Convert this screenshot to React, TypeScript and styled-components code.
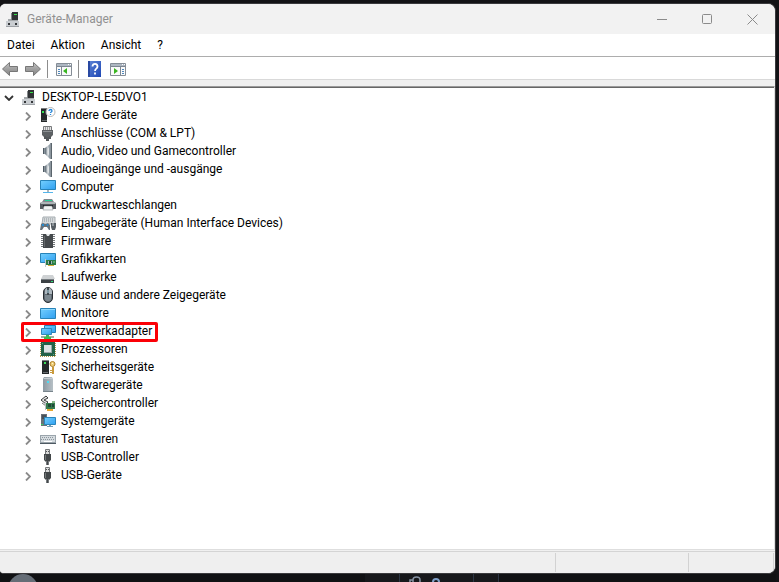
import React from "react";
import styled, { createGlobalStyle } from "styled-components";

const GlobalStyle = createGlobalStyle`
  *, *::before, *::after { box-sizing: border-box; }
  body {
    margin: 0;
    background: #131316;
    color: #000;
    font: 12px/18px Roboto, "Open Sans", sans-serif;
  }
  button {
    font: inherit;
    color: inherit;
    background: none;
    border: 0;
    padding: 0;
  }
  svg { display: block; flex: none; }
`;

const Desktop = styled.div`
  min-height: 100vh;
  display: flex;
  flex-direction: column;
  padding: 3px 3px 0 0;
  background: #131316;
  overflow: hidden;
`;

const Window = styled.main`
  flex: 1;
  display: flex;
  flex-direction: column;
  border: 1px solid #3a3a3d;
  border-left: 0;
  border-radius: 6px 8px 8px 4px;
  background: #fff;
  overflow: hidden;
`;

const TitleBar = styled.header`
  display: flex;
  align-items: center;
  height: 30px;
  padding-left: 5px;
  background: #f2f2f2;
`;

const Title = styled.h1`
  flex: 1;
  margin: 0 0 0 6px;
  font-size: 12px;
  font-weight: 400;
  color: #919191;
`;

const CaptionButton = styled.button`
  width: 45px;
  height: 30px;
  display: grid;
  place-items: center;
  color: #8b8b8b;
`;

const MenuBar = styled.nav`
  display: flex;
  align-items: center;
  gap: 16px;
  height: 23px;
  padding-left: 7px;
  border-bottom: 1px solid #adadad;
`;

const ToolBar = styled.div`
  display: flex;
  align-items: center;
  height: 23px;
  padding: 2px 0 0 2px;
  border-bottom: 1px solid #d9d9d9;
`;

const ToolButton = styled.button<{ $gap: number }>`
  margin-right: ${(p) => p.$gap}px;
`;

const ToolSeparator = styled.span<{ $gap: number }>`
  width: 1px;
  height: 18px;
  margin-right: ${(p) => p.$gap}px;
  background: #8d8d8d;
`;

const Frame = styled.section`
  flex: 1;
  display: flex;
  flex-direction: column;
  padding: 6px 0 1px;
  background: #f0f0f0;
`;

const TreePane = styled.div`
  flex: 1;
  background: #fff;
  border: solid #dedede;
  border-width: 0 1px 1px 0;
  border-top: 1px solid #9b9b9b;
  box-shadow: inset 0 1px #666;
  padding-top: 1px;
`;

const Tree = styled.ul`
  list-style: none;
  margin: 0;
  padding: 0;
`;

const Row = styled.div<{ $level: number }>`
  position: relative;
  display: flex;
  align-items: center;
  width: max-content;
  height: 18px;
  padding-left: ${(p) => (p.$level ? 22 : 3)}px;
  padding-right: 6px;
`;

const Expander = styled.button<{ $open?: boolean }>`
  width: 12px;
  height: 18px;
  margin-right: 6px;
  padding-top: ${(p) => (p.$open ? 2 : 3)}px;
  display: grid;
  place-items: center;
  color: ${(p) => (p.$open ? "#333" : "#8a8a8a")};
`;

const Label = styled.span`
  margin-left: 5px;
  white-space: nowrap;
`;

const Highlight = styled.span`
  position: absolute;
  z-index: 1;
  inset: 0 0 -2px 21px;
  border: 3px solid #fb0007;
  border-radius: 2px;
  pointer-events: none;
`;

const StatusBar = styled.footer`
  display: grid;
  grid-template-columns: 1fr 133px 85px;
  height: 22px;
  padding: 1px 1px 1px 0;
  background: #efefef;
  border-top: 1px solid #d4d4d4;
`;

const StatusPanel = styled.span`
  border-right: 1px solid #d2d2d2;
`;

const Strip = styled.div`
  display: flex;
  height: 8px;
  padding-right: 277px;
  overflow: hidden;
  background: #101113;
`;

const Avatar = styled.span`
  width: 30px;
  height: 30px;
  margin-left: 8px;
  border-radius: 50%;
  background: #656d76;
  flex: none;
`;

const StripCell = styled.span<{ $width: number }>`
  width: ${(p) => p.$width}px;
  border-right: 1px solid #2c3644;
  padding-left: 9px;
  background: #17181b;
`;

const StripSpace = styled.span`
  flex: 1;
`;

type PicProps = { children: React.ReactNode; w?: number; h?: number };
const Pic = ({ children, w = 16, h = 16 }: PicProps) => (
  <svg width={w} height={h} viewBox={`0 0 ${w} ${h}`} aria-hidden="true" fill="none">
    {children}
  </svg>
);

const gradients = (
  <>
    <linearGradient id="screen" x1="0" y1="0" x2="1" y2="1">
      <stop stopColor="#74d0ff" />
      <stop offset="1" stopColor="#2f9ff0" />
    </linearGradient>
    <linearGradient id="cone" x1="0" x2="1">
      <stop stopColor="#5b6770" />
      <stop offset=".5" stopColor="#c7ced3" />
      <stop offset="1" stopColor="#84919b" />
    </linearGradient>
    <linearGradient id="arrow" x1="0" y1="0" x2="0" y2="1">
      <stop stopColor="#c4c4c4" />
      <stop offset=".5" stopColor="#a0a0a0" />
      <stop offset="1" stopColor="#868686" />
    </linearGradient>
    <linearGradient id="help" x1="0" y1="0" x2="1" y2="1">
      <stop stopColor="#5e85d6" />
      <stop offset="1" stopColor="#1d46b4" />
    </linearGradient>
    <linearGradient id="tower" x1="0" x2="1">
      <stop stopColor="#8c99a2" />
      <stop offset="1" stopColor="#b7c0c6" />
    </linearGradient>
  </>
);

const HostIcon = () => (
  <Pic>
    <path d="M7 1h6v9H7z" fill="#303335" />
    <path d="M6 2h1v7H6z" fill="#85888b" />
    <path d="M9 3h3v1H9z" fill="#35df48" />
    <path d="M3 8h3v1h7v2H3z" fill="#a4a8ab" />
    <path d="M1 10h13v6H1z" fill="#c9cdd1" />
    <path d="M1 15h13v1H1z" fill="#9da1a5" />
    <path d="M3 12h2v2H3zM10 12h2v2h-2z" fill="#34373a" />
  </Pic>
);

const icons: Record<string, React.ReactNode> = {
  other: (
    <Pic>
      <path d="M1 1h6v1H1z" fill="#7b7d7f" />
      <path d="M1 2h6v13H1z" fill="#252829" />
      <path d="M2 4h2v2H2z" fill="#32e152" />
      <path d="M2 13h5v1H2z" fill="#62676a" />
      <circle cx="10.5" cy="5" r="4.5" fill="#fff" stroke="#b5b5b5" />
      <path d="M9 4c0-2 3-2 3 0 0 1-1.500 1-1.500 2M10.500 7v1" stroke="#2284d8" strokeWidth="1.300" />
    </Pic>
  ),
  ports: (
    <Pic>
      <path d="M3.500 1.500h8v4h-8z" fill="#e5e5e6" stroke="#77797b" />
      <path d="M5 3h1m1 0h1m1 0h1M5 5h1m1 0h1m1 0h1" stroke="#515456" />
      <path d="M2 5h11v5l-2 2H4l-2-2z" fill="#5d6164" />
      <path d="M3 6h9v1H3z" fill="#8c9093" />
      <path d="M4 11h2v3H4zM9 11h2v3H9zM6 12h3v4H6z" fill="#54585b" />
    </Pic>
  ),
  audio: (
    <Pic>
      <path d="M3 5h3v6H3z" fill="#86919a" />
      <path d="M5 5l5-4v15l-5-5z" fill="url(#cone)" />
      <path d="M10 0h2v16h-2z" fill="#8c969e" />
      <path d="M11 0h1v16h-1z" fill="#5a646c" />
      <path d="M3 5h1v6H3z" fill="#4f5a63" />
      <path d="M9 4c-2 2-2 7 0 9z" fill="#e2e6e8" />
    </Pic>
  ),
  computer: (
    <Pic>
      <path d="M.5 1.500h15v9H.5z" fill="url(#screen)" stroke="#2783b9" />
      <path d="M7 11h2v2H7z" fill="#aeb6bc" />
      <path d="M3 13h10v1H3z" fill="#54b5eb" />
    </Pic>
  ),
  printer: (
    <Pic>
      <path d="M4 2h8l2 3H2z" fill="#81898e" />
      <path d="M5 3h7v1H5z" fill="#26cf96" />
      <path d="M1 5h14l1 2v5H0V7z" fill="#555b60" />
      <path d="M1 5h14v2H1z" fill="#aeb4b7" />
      <path d="M3 8h10v2H3z" fill="#202427" />
      <path d="M4 9h8l1 4H3z" fill="#f1f3f4" stroke="#777d81" strokeWidth=".5" />
    </Pic>
  ),
  input: (
    <Pic>
      <path d="M3 2h12v7H2z" fill="#d5d9db" stroke="#a6adb1" />
      <path d="M4 4h10M4 6h10" stroke="#8d959b" strokeDasharray="1 1" />
      <path d="M0 15l1-6 2-1 2 1h1l2-1 2 2v5H9l-2-3H4l-2 3z" fill="#68727a" />
      <path d="M2 9h2v2H2z" fill="#258bd1" />
      <circle cx="7.500" cy="10" r="1" fill="#258bd1" />
      <path d="M11 8h5v4l-1 3h-3l-1-3z" fill="#555d63" />
      <path d="M13 8v3" stroke="#c4cbd0" />
    </Pic>
  ),
  firmware: (
    <Pic>
      <path d="M1 1.500h14M1 3.500h14M1 5.500h14M1 7.500h14M1 9.500h14M1 11.500h14M1 13.500h14" stroke="#74787b" />
      <path d="M3 1h10v14H3z" fill="#45494c" />
      <path d="M6 1h4l-1 2H7z" fill="#e3e6e8" />
      <path d="M4 3h1v11H4z" fill="#63676a" />
    </Pic>
  ),
  graphics: (
    <Pic>
      <path d="M.5 2.500h15v9H.5z" fill="url(#screen)" stroke="#2783b9" />
      <path d="M6 9h10v5H6z" fill="#2d7c46" />
      <path d="M5 8h1v8H5z" fill="#c3c9cd" />
      <path d="M8 10h4v3H8z" fill="#a2b7b8" />
      <path d="M9 10h2v3H9z" fill="#174d36" />
      <path d="M13 10h2v2h-2z" fill="#54a66b" />
      <path d="M8 14h6v1H8z" fill="#d9aa35" />
    </Pic>
  ),
  drive: (
    <Pic>
      <path d="M3 6h10l2 4H1z" fill="#cfd2d4" />
      <path d="M1 10h13v4H1z" fill="#3b4044" />
      <path d="M1 10h13v1H1z" fill="#777d81" />
      <path d="M11 12h2v1h-2z" fill="#2ddf76" />
    </Pic>
  ),
  mouse: (
    <Pic>
      <rect x="3.500" y=".5" width="9" height="15" rx="4.500" fill="#606a72" stroke="#282e33" />
      <path d="M5 4c0-3 2-3 2-3v6H5zM9 1c2 0 3 2 3 4v2H9z" fill="#aeb8bf" />
      <path d="M5 8h6v4c-1 3-5 3-6 0z" fill="#7d8991" />
      <path d="M8 1v7" stroke="#262c31" />
      <path d="M8 3v3" stroke="#b7e5f6" />
    </Pic>
  ),
  monitor: (
    <Pic>
      <path d="M.5 3.500h15v10H.5z" fill="url(#screen)" stroke="#2783b9" />
      <path d="M1 4h14v1H1z" fill="#8edaff" />
    </Pic>
  ),
  network: (
    <Pic>
      <path d="M4.500 2.500h11v7h-11z" fill="url(#screen)" stroke="#257eb5" />
      <path d="M1.500 5.500h10v6h-10z" fill="url(#screen)" stroke="#3189bc" />
      <path d="M1 13h13v2H1z" fill="#9bafa0" />
      <path d="M6 12h3v2h2v2H4v-2h2z" fill="#39bd54" />
    </Pic>
  ),
  cpu: (
    <Pic>
      <path d="M0 .5h16M0 15.500h16M.5 0v16M15.500 0v16" stroke="#b69847" strokeDasharray="1 1" />
      <path d="M1 1h14v14H1z" fill="#246248" />
      <path d="M4 4h8v8H4z" fill="#dce3e3" />
      <path d="M4 11h8v1H4zM11 4h1v8h-1z" fill="#9ba7a8" />
      <path d="M2 2h1v1H2zM13 13h1v1h-1z" fill="#61a47d" />
    </Pic>
  ),
  security: (
    <Pic>
      <path d="M2 1h7v1H2z" fill="#7c8083" />
      <path d="M2 2h7v13H2z" fill="#25292b" />
      <path d="M4 3h2v2H4z" fill="#3dde5b" />
      <path d="M3 13h5v1H3z" fill="#696d70" />
      <circle cx="12.500" cy="5" r="2.500" fill="#f0cf7c" stroke="#ad8027" />
      <path d="M12 4h1v1h-1z" fill="#fff7cf" />
      <path d="M12 8h2v7h-2zM10 11h2v1h-2zM10 13h2v1h-2z" fill="#c99a3d" />
    </Pic>
  ),
  software: (
    <Pic>
      <path d="M4 0h8l1 2v13H3V2z" fill="url(#tower)" />
      <path d="M4 1h8v1H4z" fill="#c6cdd2" />
      <path d="M7 4h2v2H7z" fill="#4cdcf4" />
      <path d="M3 14h10v1H3z" fill="#78848c" />
    </Pic>
  ),
  storage: (
    <Pic>
      <path d="M1 5l5-4 2 2-4 2 4 2-2 2z" fill="#e2e2e2" stroke="#3b3d3e" />
      <path d="M2 8l4 3 3-3" stroke="#747779" />
      <path d="M6 8h9v6H6z" fill="#347a4d" />
      <path d="M5 7h1v8H5z" fill="#b8bdc0" />
      <path d="M8 9h3v3H8zM12 9h2v3h-2z" fill="#1f4836" />
      <path d="M12 6h3v2h-3z" fill="#8aba88" />
      <path d="M7 14h6v2H7z" fill="#e5a72f" />
    </Pic>
  ),
  system: (
    <Pic>
      <path d="M1 1h6v12H1z" fill="#697279" />
      <path d="M2 3h4M2 5h4" stroke="#2c3338" />
      <path d="M1 11h2v1H1z" fill="#3ed461" />
      <path d="M4.500 4.500h11v7h-11z" fill="url(#screen)" stroke="#2a86bc" />
      <path d="M9 12h2v1H9zM7 13h6v1H7z" fill="#769db3" />
    </Pic>
  ),
  keyboard: (
    <Pic>
      <path d="M0 4h16v9H0z" fill="#9aa4ab" />
      <path d="M1 5h14v6H1z" fill="#d5dbdf" />
      <path d="M2 6.500h12M1 8.500h14" stroke="#8c969e" strokeDasharray="1 1" />
      <path d="M4 10.500h8" stroke="#fff" />
      <path d="M0 12h16v1H0z" fill="#4d5962" />
    </Pic>
  ),
  usb: (
    <Pic>
      <path d="M5.500.5h4v5h-4z" fill="#dadada" stroke="#75787a" />
      <path d="M6 2h1v1H6zM8 2h1v1H8z" fill="#525557" />
      <path d="M4 5h7v6l-2 2H6l-2-2z" fill="#434749" />
      <path d="M5 6h1v5H5z" fill="#74787a" />
      <path d="M6 12h3v4H6z" fill="#74787b" />
      <path d="M7 12h1v4H7z" fill="#45494b" />
    </Pic>
  ),
};

const devices: [string, string][] = [
  ["Andere Geräte", "other"],
  ["Anschlüsse (COM & LPT)", "ports"],
  ["Audio, Video und Gamecontroller", "audio"],
  ["Audioeingänge und -ausgänge", "audio"],
  ["Computer", "computer"],
  ["Druckwarteschlangen", "printer"],
  ["Eingabegeräte (Human Interface Devices)", "input"],
  ["Firmware", "firmware"],
  ["Grafikkarten", "graphics"],
  ["Laufwerke", "drive"],
  ["Mäuse und andere Zeigegeräte", "mouse"],
  ["Monitore", "monitor"],
  ["Netzwerkadapter", "network"],
  ["Prozessoren", "cpu"],
  ["Sicherheitsgeräte", "security"],
  ["Softwaregeräte", "software"],
  ["Speichercontroller", "storage"],
  ["Systemgeräte", "system"],
  ["Tastaturen", "keyboard"],
  ["USB-Controller", "usb"],
  ["USB-Geräte", "usb"],
];

const Arrow = ({ forward }: { forward?: boolean }) => (
  <Pic>
    <path
      d={forward ? "M15.500 8l-7-6.500v4h-8v5h8v4z" : "M.5 8l7-6.500v4h8v5h-8v4z"}
      fill="url(#arrow)"
      stroke="#777"
    />
  </Pic>
);

const PanelIcon = ({ right }: { right?: boolean }) => (
  <Pic>
    <path d="M.5 2.500h15v12H.5z" fill="#fafafa" stroke="#858d96" />
    <path d="M1 3h14v2H1z" fill="#aeb7c2" />
    <path d="M12 3h1v1h-1zM14 3h1v1h-1z" fill="#fff" />
    <path d="M1 5.500h14" stroke="#7d8792" />
    {right ? (
      <>
        <path d="M10.500 6v8" stroke="#7d8792" />
        <path d="M12 8.500h2M12 10.500h2M12 12.500h2" stroke="#4f88bd" />
        <path d="M4 7l4 3-4 3z" fill="#38b520" />
      </>
    ) : (
      <>
        <path d="M5.500 6v8" stroke="#7d8792" />
        <path d="M2 8.500h2M2 10.500h2M2 12.500h2" stroke="#4f88bd" />
        <path d="M11 7l-4 3 4 3z" fill="#38b520" />
      </>
    )}
  </Pic>
);

const HelpIcon = () => (
  <Pic w={13}>
    <path d="M0 0h13v16H0z" fill="url(#help)" />
    <path d="M0 0h2v16H0z" fill="#2949a2" />
    <path d="M4.500 5.500c0-3.500 5-3.500 5 0 0 2.200-2.500 2-2.500 4.500M7 11.500v2" stroke="#fff" strokeWidth="1.800" />
  </Pic>
);

export default function App() {
  return (
    <Desktop>
      <GlobalStyle />
      <svg width="0" height="0" aria-hidden="true">
        <defs>{gradients}</defs>
      </svg>
      <Window>
        <TitleBar>
          <HostIcon />
          <Title>Geräte-Manager</Title>
          <CaptionButton aria-label="Minimieren">
            <Pic w={11} h={11}><path d="M0 5.500h10" stroke="currentColor" /></Pic>
          </CaptionButton>
          <CaptionButton aria-label="Maximieren">
            <Pic w={11} h={11}><rect x=".5" y=".5" width="9" height="9" rx="1" stroke="currentColor" /></Pic>
          </CaptionButton>
          <CaptionButton aria-label="Schließen">
            <Pic w={11} h={11}><path d="M.5.5l10 10M10.500.5l-10 10" stroke="currentColor" /></Pic>
          </CaptionButton>
        </TitleBar>
        <MenuBar>
          <button>Datei</button>
          <button>Aktion</button>
          <button>Ansicht</button>
          <button>?</button>
        </MenuBar>
        <ToolBar>
          <ToolButton $gap={7} aria-label="Zurück"><Arrow /></ToolButton>
          <ToolButton $gap={6} aria-label="Vorwärts"><Arrow forward /></ToolButton>
          <ToolSeparator $gap={8} />
          <ToolButton $gap={6} aria-label="Konsolenstruktur"><PanelIcon /></ToolButton>
          <ToolSeparator $gap={9} />
          <ToolButton $gap={9} aria-label="Hilfe"><HelpIcon /></ToolButton>
          <ToolButton $gap={0} aria-label="Aktionsbereich"><PanelIcon right /></ToolButton>
        </ToolBar>
        <Frame>
          <TreePane>
            <Tree role="tree" aria-label="Geräte">
              <li role="treeitem" aria-expanded="true">
                <Row $level={0}>
                  <Expander $open aria-label="DESKTOP-LE5DVO1 reduzieren">
                    <Pic w={10} h={6}><path d="M1 1l4 4 4-4" stroke="currentColor" strokeWidth="1.800" /></Pic>
                  </Expander>
                  <HostIcon />
                  <Label>DESKTOP-LE5DVO1</Label>
                </Row>
                <Tree role="group">
                  {devices.map(([name, icon]) => (
                    <li key={name} role="treeitem" aria-expanded="false">
                      <Row $level={1}>
                        <Expander aria-label={`${name} erweitern`}>
                          <Pic w={6} h={9}><path d="M1 .5l4 4-4 4" stroke="currentColor" strokeWidth="1.800" /></Pic>
                        </Expander>
                        {icons[icon]}
                        <Label>{name}</Label>
                        {icon === "network" && <Highlight />}
                      </Row>
                    </li>
                  ))}
                </Tree>
              </li>
            </Tree>
          </TreePane>
        </Frame>
        <StatusBar>
          <StatusPanel />
          <StatusPanel />
          <StatusPanel />
        </StatusBar>
      </Window>
      <Strip>
        <Avatar />
        <StripSpace />
        <StripCell $width={35} />
        <StripCell $width={74}>
          <Pic w={32} h={8}>
            <path d="M4 8V6c0-4 7-4 7 0v2M1 8V6h3" stroke="#8793a3" strokeWidth="1.500" />
            <path d="M24 8c0-4 6-4 6 0" stroke="#7f9fc7" strokeWidth="2" />
          </Pic>
        </StripCell>
        <StripCell $width={25} />
      </Strip>
    </Desktop>
  );
}
